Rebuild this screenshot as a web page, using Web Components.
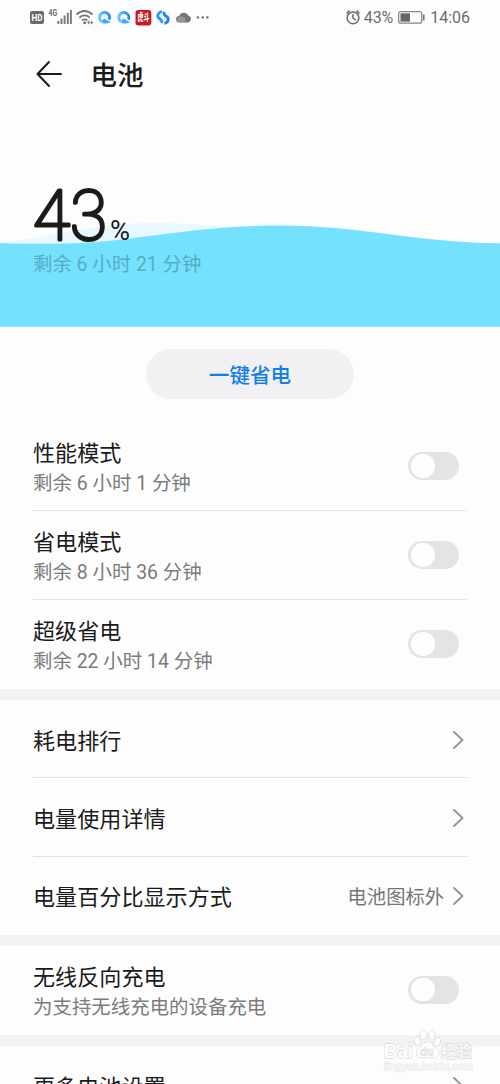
<!DOCTYPE html>
<html lang="zh-CN">
<head>
<meta charset="utf-8">
<title>电池</title>
<style>
html,body{margin:0;height:1084px;overflow:hidden;background:#fdfdfd}
body{font-family:Roboto,"Noto Sans CJK SC",sans-serif;color:#1b1b1b}
</style>
</head>
<body>
<battery-page></battery-page>
<script>
const define = (name, html) => customElements.define(name, class extends HTMLElement {
  constructor() {
    super();
    const t = document.createElement('template');
    t.innerHTML = html;
    this.attachShadow({mode: 'open'}).append(t.content.cloneNode(true));
  }
});

define('status-bar', `
<style>
:host{display:flex;height:36px;box-sizing:border-box;padding:0 30px;align-items:center;justify-content:space-between;color:#6c6c6c;font-size:16px}
svg{display:block}
.t{display:flex;align-items:center;height:36px;line-height:36px}
.t svg{flex:none}
.p{margin-left:1.500px;letter-spacing:-.1px}
.time{margin-left:4px}
</style>
<svg width="182" height="36" viewBox="30 0 182 36">
  <rect x="30" y="11" width="14" height="13" rx="2" fill="#6b6b6b"/>
  <text x="37" y="21" font-size="9.500" font-weight="700" text-anchor="middle" fill="#fff" textLength="11" lengthAdjust="spacingAndGlyphs">HD</text>
  <text x="48.500" y="16.300" font-size="8.500" font-weight="700" fill="#6b6b6b" textLength="8.500" lengthAdjust="spacingAndGlyphs">4G</text>
  <path d="M58.300 21v3M61.500 18.500v5.500M64.600 15.500v8.500M67.800 12.800v11.200M70.900 10v14" stroke="#777" stroke-width="1.900"/>
  <g fill="none" stroke="#777" stroke-width="1.700"><path d="M76.500 14.500q8-7 16 0M79.300 17.600q5.300-4.400 10.500 0M82 20.500q2.700-2.200 5.300 0"/></g>
  <circle cx="84.700" cy="22.800" r="1.500" fill="#777"/><path d="M89.500 20.500v4l-2.500-2zM90.800 20.500v4l2.500-2z" fill="#777"/>
  <defs>
    <linearGradient id="b" x1="0" x2="1"><stop stop-color="#64c7f8"/><stop offset="1" stop-color="#2689e9"/></linearGradient>
    <g id="qq"><circle r="7" fill="#eaf6fe"/><path d="M4.500 2.200A5 5 0 1 0-2.800 4.100" fill="none" stroke="url(#b)" stroke-width="2.800"/><path d="M-2.500 5.600C0 6.300 3.500 6 6.200 4.800L4.500 3.600C2.500 3.500 2 1.300 0 1.500S-2 3-2.500 5.600z" fill="#48a8f3"/></g>
  </defs>
  <use href="#qq" x="104.500" y="17.500"/><use href="#qq" x="123.800" y="17.500"/>
  <rect x="135.500" y="10" width="15.800" height="15.500" rx="3" fill="#cc1720"/>
  <text x="143.400" y="21.300" font-size="10" font-weight="900" text-anchor="middle" fill="#fff" textLength="12" lengthAdjust="spacingAndGlyphs">虎斗</text>
  <circle cx="163" cy="17.500" r="7" fill="#e8f5ff"/>
  <path d="M162 11.500C157.500 12.500 156.500 16.500 159.500 18.500C161 19.700 162.500 20.500 161.500 23" fill="none" stroke="#2e9aef" stroke-width="2.800"/><path d="M164.300 12C163.300 14 164.700 15.500 166.500 16.500C169.500 18.500 168.500 22.500 164.500 23.300" fill="none" stroke="#3678e6" stroke-width="2.800"/>
  <path d="M179.500 22.500a3.200 3.200 0 0 1-.4-6.400 5 5 0 0 1 9.300-.4 3.500 3.500 0 0 1-.2 6.800z" fill="#737477"/>
  <path d="M178 22a3.200 3.200 0 0 1 2.500-5.500 4 4 0 0 1 4.500 6z" fill="#96979a"/>
  <g fill="#6b6b6b"><circle cx="197.900" cy="17.400" r="1.200"/><circle cx="202.700" cy="17.400" r="1.200"/><circle cx="207.400" cy="17.400" r="1.200"/></g>
</svg>
<div class="t">
  <svg width="17" height="36" viewBox="349 0 17 36" fill="none" stroke="#6b6b6b" stroke-width="1.500"><circle cx="357" cy="17.800" r="5.900"/><path d="M357 14v4l2.800 2M350.500 13.500l3-3M363.500 13.500l-3-3"/></svg>
  <span class="p">43%</span>
  <svg style="margin-left:5px" width="28" height="36" viewBox="400 0 28 36"><rect x="400.700" y="11.700" width="23" height="11.500" rx="2" fill="none" stroke="#858585" stroke-width="1.200"/><rect x="402.500" y="13.300" width="9.500" height="8.300" fill="#666"/><path d="M425.700 14.500v6" stroke="#777" stroke-width="1.700"/></svg>
  <span class="time">14:06</span>
</div>`);

define('page-header', `
<style>
:host{display:flex;align-items:center;height:78px;padding-left:36px;gap:27.500px;font-size:26.500px;font-weight:500;line-height:78px}
svg{display:block;margin-bottom:2px}
span{padding-top:2px}
</style>
<svg width="27" height="28" viewBox="0 0 27 28" fill="none" stroke="#1c1c1c" stroke-width="2" stroke-linecap="round" stroke-linejoin="round"><path d="M13 2L1.500 14 13 26M1.500 14H25"/></svg>
<span><slot></slot></span>`);

define('battery-level', `
<style>
:host{display:grid;height:213px}
:host>*{grid-area:1/1}
svg{display:block}
.left{align-self:start;padding:137px 0 0 33px;font-size:19.400px;line-height:28px;color:#55adc5;white-space:nowrap}
</style>
<svg width="500" height="213" viewBox="0 114 500 213">
  <path d="M0 242.500C60 237 90 223 158 223C230 223 300 240 500 246V260H0z" fill="#e9f7fe"/>
  <path d="M0 243.300C20 244 60 244.500 95 242C155 237 205 225.500 280 225.500C365 226 410 242 500 243.300V326.700H0z" fill="#74e1ff"/>
  <g fill="#1b1b1b"><text x="33" y="240" font-size="70.500" font-weight="100" stroke="#1b1b1b" stroke-width="3.200" stroke-linejoin="round" textLength="74" lengthAdjust="spacingAndGlyphs">43</text>
  <text x="110" y="239.500" font-size="27" textLength="20" lengthAdjust="spacingAndGlyphs">%</text></g>
</svg>
<div class="left"><slot></slot></div>`);

define('save-button', `
<style>
:host{display:flex;justify-content:center;padding:22px 0 23px}
button{all:unset;box-sizing:border-box;width:208px;height:50px;padding-top:2px;border-radius:25px;background:#f2f0f3;color:#137fe6;font-size:20.600px;font-weight:500;line-height:50px;text-align:center}
</style><button><slot></slot></button>`);

define('toggle-switch', `
<style>
:host{display:block;box-sizing:border-box;width:51px;height:28px;border-radius:14px;background:#e5e3e6;padding:2px 3px}
i{display:block;width:23.500px;height:23.500px;border-radius:50%;background:#fefefe}
</style><i></i>`);

define('list-group', `
<style>
:host{display:block;border-bottom:11px solid #f3f2f5}
:host([last]){border:0}
</style><slot></slot>`);

define('switch-row', `
<style>
:host{display:flex;box-sizing:border-box;height:89px;margin:0 33px;padding-right:8px;align-items:center;justify-content:space-between;border-bottom:1px solid #e4e4e5}
:host(:last-of-type){border-color:transparent}
.b{padding-top:4px}
.t{font-size:22.100px;line-height:30px}
.s{font-size:19.450px;line-height:28px;color:#7b7b7b;margin-top:2px;white-space:nowrap}
</style>
<div class="b"><div class="t"><slot></slot></div><div class="s"><slot name="sub"></slot></div></div>
<toggle-switch></toggle-switch>`);

define('link-row', `
<style>
:host{display:flex;box-sizing:border-box;height:78.330px;margin:0 33px;align-items:center;border-bottom:1px solid #e1e1e2;font-size:22.100px;line-height:32px}
:host(:last-of-type){border-color:transparent}
.t{flex:1;padding-top:4px}
.v{font-size:19.300px;color:#767676;padding-top:5px}
svg{display:block;margin:2px 2px 0 8px}
</style>
<span class="t"><slot></slot></span><span class="v"><slot name="value"></slot></span>
<svg width="13" height="20" viewBox="0 0 13 20" fill="none" stroke="#959595" stroke-width="1.900" stroke-linecap="round" stroke-linejoin="round"><path d="M2 2l8.500 8L2 18"/></svg>`);

define('site-watermark', `
<style>
:host{position:absolute;left:380px;top:1028px;width:98px;height:46px}
svg{display:block}
</style>
<svg width="98" height="46" viewBox="380 1028 98 46" fill="#fff" fill-opacity=".8" stroke="#dadade" stroke-width=".8" stroke-linejoin="round">
  <ellipse cx="417.500" cy="1041" rx="3.200" ry="4.600" transform="rotate(-15 417.500 1041)"/><ellipse cx="423.500" cy="1034.800" rx="3.400" ry="4.900"/><ellipse cx="431.800" cy="1035.200" rx="3.400" ry="4.900"/><ellipse cx="437.300" cy="1042" rx="3.200" ry="4.600" transform="rotate(15 437.300 1042)"/>
  <path d="M427.500 1041.500c-4 0-5 4-8.500 6.500-5 4-3 10.500 3 10 4-.5 7-.5 11 0 6.500.5 8-6 3-10-3.500-2.500-4.500-6.500-8.500-6.500z"/>
  <g font-family="Liberation Sans"><text x="384" y="1057.500" font-size="20" font-weight="700" textLength="29" lengthAdjust="spacingAndGlyphs" stroke-width="1.300" paint-order="stroke" fill-opacity="1">Bai</text>
  <text x="420" y="1055.500" font-size="12" font-weight="700" textLength="14" lengthAdjust="spacingAndGlyphs" fill="#ececef" stroke-width=".5">du</text>
  <text x="384" y="1070" font-size="10.500" stroke="#e6e6e8" stroke-width="1" paint-order="stroke" textLength="89" lengthAdjust="spacingAndGlyphs">jingyan.baidu.com</text></g>
  <text x="441" y="1057" font-size="15.500" font-weight="700" textLength="31" lengthAdjust="spacingAndGlyphs" stroke-width="1.300" paint-order="stroke">经验</text>
</svg>`);

define('battery-page', `
<style>:host{display:block;position:relative;width:500px;height:1084px;overflow:hidden}</style>
<status-bar></status-bar>
<page-header>电池</page-header>
<battery-level>剩余 6 小时 21 分钟</battery-level>
<save-button>一键省电</save-button>
<list-group>
  <switch-row>性能模式<span slot="sub">剩余 6 小时 1 分钟</span></switch-row>
  <switch-row>省电模式<span slot="sub">剩余 8 小时 36 分钟</span></switch-row>
  <switch-row>超级省电<span slot="sub">剩余 22 小时 14 分钟</span></switch-row>
</list-group>
<list-group>
  <link-row>耗电排行</link-row>
  <link-row>电量使用详情</link-row>
  <link-row>电量百分比显示方式<span slot="value">电池图标外</span></link-row>
</list-group>
<list-group>
  <switch-row>无线反向充电<span slot="sub">为支持无线充电的设备充电</span></switch-row>
</list-group>
<list-group last><link-row>更多电池设置</link-row></list-group>
<site-watermark></site-watermark>`);
</script>
</body>
</html>
